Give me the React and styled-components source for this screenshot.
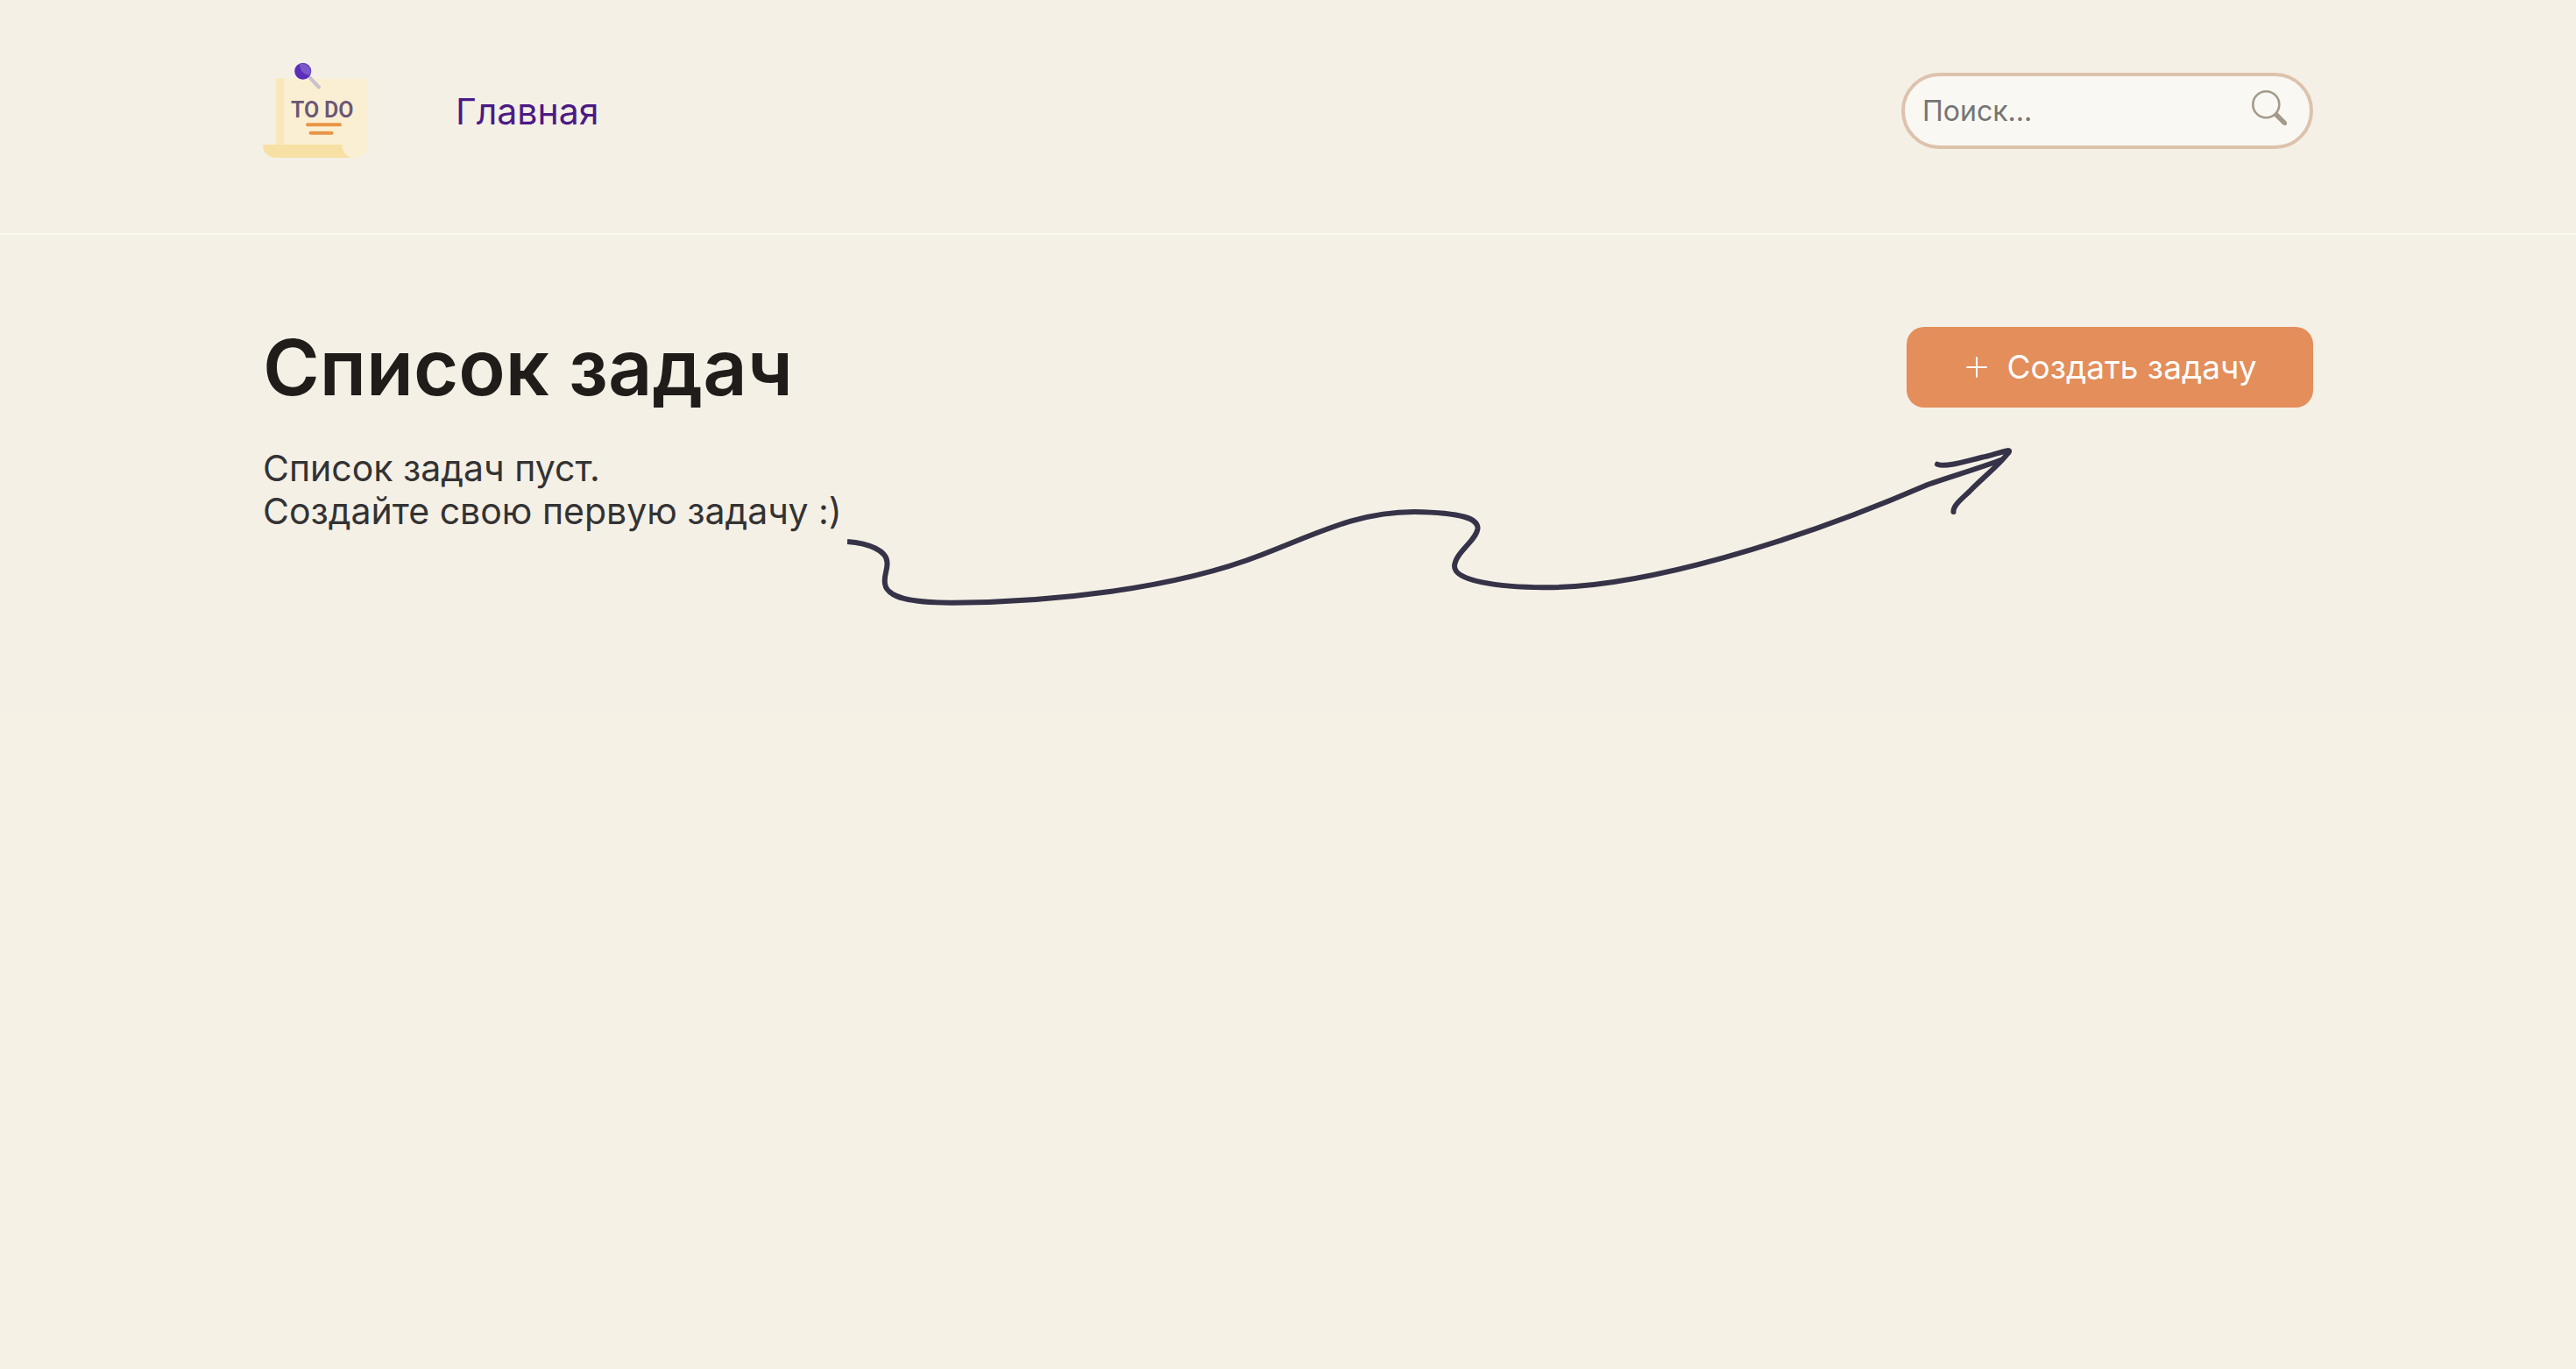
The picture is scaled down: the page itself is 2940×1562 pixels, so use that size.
import React from "react";
import styled, { createGlobalStyle } from "styled-components";

const GlobalStyle = createGlobalStyle`
  *, *::before, *::after { box-sizing: border-box; }
  body {
    margin: 0;
    background: #f6f1e5;
    color: #333;
    font-family: Inter, "Noto Sans", sans-serif;
  }
`;

const Page = styled.div`
  background: linear-gradient(90deg, #f5f0e6, #f5f0e5);
`;

const Header = styled.header`
  padding: 66px 40px 80px;
  border-bottom: 2px solid #faf7f0;
`;

const Container = styled.div`
  max-width: 2340px;
  margin: 0 auto;
`;

const HeaderRow = styled(Container)`
  display: flex;
  align-items: center;
  gap: 100px;
`;

const LogoLink = styled.a`
  display: block;
  line-height: 0;
`;

const Nav = styled.nav`
  flex: 1;
`;

const NavLink = styled.a`
  display: inline-block;
  padding-top: 2px;
  color: #4b1a86;
  font-size: 41px;
  line-height: 49px;
  text-decoration: none;
`;

const SearchForm = styled.form`
  display: flex;
  align-items: center;
  width: 470px;
  height: 87px;
  padding: 0 26px 0 20px;
  background: #f9f8f2;
  border: 4px solid #ddc2ad;
  border-radius: 44px;
`;

const SearchInput = styled.input`
  flex: 1;
  min-width: 0;
  padding: 2px 0 0;
  border: 0;
  outline: 0;
  background: transparent;
  color: #333;
  font: inherit;
  font-size: 32px;
  line-height: 40px;
  &::placeholder { color: #757575; opacity: 1; }
`;

const IconButton = styled.button`
  padding: 0;
  border: 0;
  background: transparent;
  line-height: 0;
  cursor: pointer;
`;

const Main = styled.main`
  padding: 105px 40px 122px;
`;

const TitleRow = styled.div`
  display: flex;
  align-items: center;
  justify-content: space-between;
`;

const Title = styled.h1`
  margin: 0;
  color: #1f1c1a;
  font-size: 88px;
  font-weight: 600;
  line-height: 90px;
`;

const CreateButton = styled.button`
  display: flex;
  align-items: center;
  justify-content: center;
  gap: 22px;
  width: 464px;
  height: 92px;
  padding: 0 0 0 4px;
  border: 0;
  border-radius: 20px;
  background: #e38e5b;
  color: #fff;
  font: inherit;
  font-size: 37px;
  line-height: 44px;
  cursor: pointer;
`;

const EmptyState = styled.section`
  display: grid;
  grid-template-columns: 667px minmax(0, 1330px);
  margin-top: 45px;
`;

const EmptyText = styled.p`
  margin: 0;
  font-size: 41px;
  line-height: 49px;
  white-space: nowrap;
`;

const ArrowDrawing = styled.svg`
  display: block;
  width: 100%;
  height: auto;
`;

function Logo() {
  return (
    <svg width="120" height="120" viewBox="300 66 120 120" role="img" aria-label="TO DO">
      <path d="M315 91q0-1.500 1.500-1.500H328V168h-13z" fill="#f8e7b8" />
      <path d="M324 89.500H418q2 0 2 2V165a15 15 0 0 1-15 15h-9L380 165H324z" fill="#faefd2" />
      <path d="M301.500 165H389q1.500 0 1.500 2c1 8 6 13 13 13H315c-8 0-15-6-15-13.500q0-1.500 1.500-1.500z" fill="#f7e0a3" />
      <path d="M353 88L364 99.500" stroke="#cac1cc" strokeWidth="4" strokeLinecap="round" />
      <circle cx="345.700" cy="81.300" r="9.500" fill="#5a2eb8" />
      <path d="M342 73a9.500 9.500 0 0 1 12 12q-4 1.500-8-2t-4-10" fill="#7b58c8" />
      <g fill="#6b5775" fontFamily="Roboto, sans-serif" fontWeight="600" fontSize="25">
        <text x="332" y="134">TO</text>
        <text x="370" y="134">DO</text>
      </g>
      <path d="M351 142.300H388M354.500 151.700H378.500" stroke="#e79547" strokeWidth="4" strokeLinecap="round" />
    </svg>
  );
}

function SearchIcon() {
  return (
    <svg width="40" height="46" viewBox="0 0 40 46" fill="none" aria-hidden="true">
      <circle cx="16.300" cy="16.300" r="15" stroke="#a39a8b" strokeWidth="2.600" />
      <path d="M24.500 28.500L28.500 24.500L39.300 35.500Q40.800 38 39.500 39.500Q38 40.800 35.500 39.300z" fill="#a39a8b" />
    </svg>
  );
}

function PlusIcon() {
  return (
    <svg width="24" height="24" viewBox="0 0 24 24" aria-hidden="true">
      <path d="M12 1V23M1 12H23" stroke="#fff" strokeWidth="2" strokeLinecap="round" />
    </svg>
  );
}

function Arrow() {
  return (
    <ArrowDrawing viewBox="967 510 1330 182" fill="none" stroke="#363348" strokeWidth="6" strokeLinejoin="round" aria-hidden="true">
      <path d="M967 618C992 620 1012 628 1012.500 642C1013 651 1008.500 656 1010 666C1012 682 1040 688 1088 687.700C1200 687 1340 672 1440 633C1505 608 1550 584 1614 584C1670 585 1687 592 1686.500 603C1685 617 1661 630 1660 646C1660 663 1710 670 1762 670.300C1875 671 2050 618 2200 553C2225 544 2254 536 2286 524" />
      <path d="M2211 529.700C2223 534 2250 524 2268 520.500C2278 518 2287 514.500 2292 514C2294 514 2293 516 2291 518C2280 532 2262 546 2248 560.500C2238 570 2229 577 2229.500 584" strokeLinecap="round" />
    </ArrowDrawing>
  );
}

export default function App() {
  return (
    <>
      <GlobalStyle />
      <Page>
        <Header>
          <HeaderRow>
            <LogoLink href="#"><Logo /></LogoLink>
            <Nav><NavLink href="#">Главная</NavLink></Nav>
            <SearchForm role="search" onSubmit={(e) => e.preventDefault()}>
              <SearchInput type="text" aria-label="Поиск" placeholder="Поиск..." />
              <IconButton type="submit" aria-label="Найти"><SearchIcon /></IconButton>
            </SearchForm>
          </HeaderRow>
        </Header>
        <Main>
          <Container>
            <TitleRow>
              <Title>Список задач</Title>
              <CreateButton type="button"><PlusIcon />Создать задачу</CreateButton>
            </TitleRow>
            <EmptyState>
              <EmptyText>Список задач пуст.<br />Создайте свою первую задачу :)</EmptyText>
              <Arrow />
            </EmptyState>
          </Container>
        </Main>
      </Page>
    </>
  );
}
